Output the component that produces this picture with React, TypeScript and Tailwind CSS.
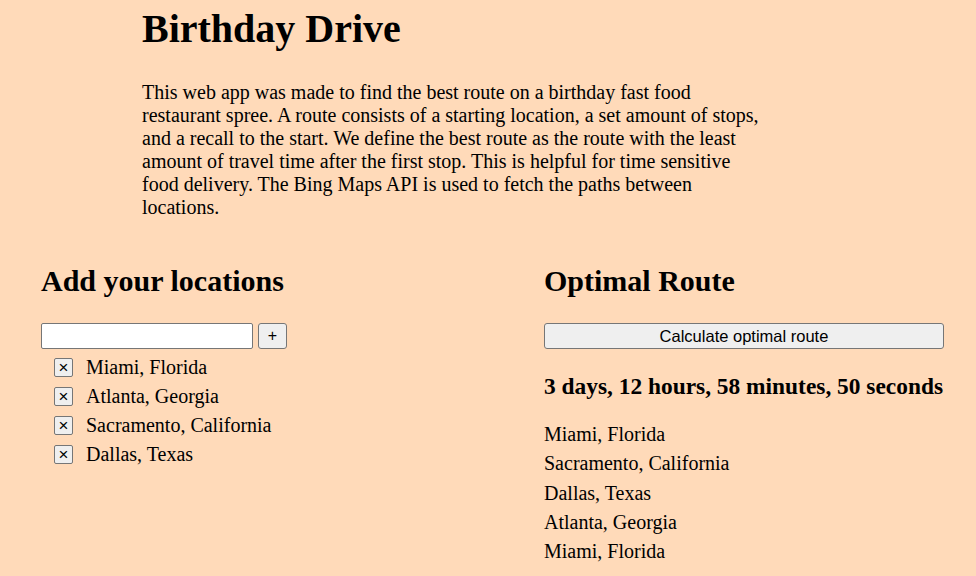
import React from "react";

const locations = ["Miami, Florida", "Atlanta, Georgia", "Sacramento, California", "Dallas, Texas"];
const route = ["Miami, Florida", "Sacramento, California", "Dallas, Texas", "Atlanta, Georgia", "Miami, Florida"];

export default function App() {
  return (
    <div className="min-h-[576px] bg-[#ffdab9] text-black font-['Liberation_Serif',serif] text-[20px] leading-[23px]">
      <div className="pl-[142px] pt-[6px]">
        <h1 className="text-[40px] leading-[46px] font-bold">Birthday Drive</h1>
        <p className="mt-[29px] w-[630px]">
          This web app was made to find the best route on a birthday fast food restaurant spree. A route consists of a
          starting location, a set amount of stops, and a recall to the start. We define the best route as the route with
          the least amount of travel time after the first stop. This is helpful for time sensitive food delivery. The Bing
          Maps API is used to fetch the paths between locations.
        </p>
      </div>
      <div className="grid grid-cols-[503px_1fr] pl-[41px] mt-[45px]">
        <div>
          <h2 className="text-[30px] leading-[34px] font-bold">Add your locations</h2>
          <div className="mt-[25px] flex items-center gap-[5px]">
            <input
              type="text"
              className="w-[212px] h-[26px] bg-white border border-[#767676] rounded-[2px] px-1 text-[16px] font-['Liberation_Sans',sans-serif]"
            />
            <button className="w-[29px] h-[26px] bg-[#efefef] border border-[#767676] rounded-[3px] text-[16px] leading-none font-['Liberation_Sans',sans-serif]">
              +
            </button>
          </div>
          <ul className="mt-[4px] pl-[13px]">
            {locations.map((l) => (
              <li key={l} className="flex items-center h-[29px]">
                <button className="w-[19px] h-[19px] bg-[#efefef] border border-[#767676] rounded-[2px] flex items-center justify-center text-[17px] leading-none font-['Liberation_Sans',sans-serif]">
                  ×
                </button>
                <span className="ml-[13px]">{l}</span>
              </li>
            ))}
          </ul>
        </div>
        <div>
          <h2 className="text-[30px] leading-[34px] font-bold">Optimal Route</h2>
          <button className="mt-[25px] w-[400px] h-[26px] bg-[#efefef] border border-[#767676] rounded-[3px] text-[16.5px] leading-none font-['Liberation_Sans',sans-serif]">
            Calculate optimal route
          </button>
          <h3 className="mt-[24px] text-[23.4px] leading-[27px] font-bold">3 days, 12 hours, 58 minutes, 50 seconds</h3>
          <ul className="mt-[23px]">
            {route.map((r, i) => (
              <li key={i} className="h-[29.3px]">{r}</li>
            ))}
          </ul>
        </div>
      </div>
    </div>
  );
}
